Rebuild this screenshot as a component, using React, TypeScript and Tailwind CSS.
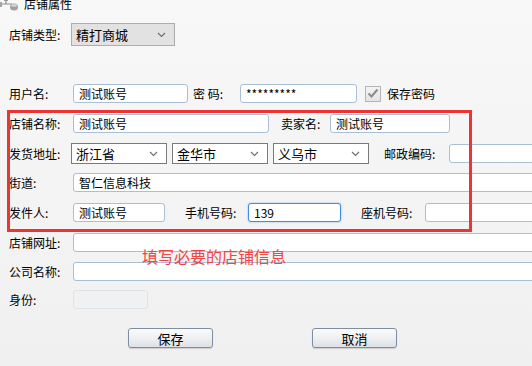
const font = { fontFamily: '"Noto Sans CJK SC", "Noto Sans", sans-serif' };

function Chevron() {
  return (
    <svg width="9" height="6" viewBox="0 0 9 6" className="shrink-0">
      <path d="M1 1 L4.5 4.5 L8 1" fill="none" stroke="#6b6b6b" strokeWidth="1.1" />
    </svg>
  );
}

function Select({ value, w, gray }: { value: string; w: string; gray?: boolean }) {
  return (
    <div
      className={`${w} h-full shrink-0 flex items-center justify-between pl-[4px] pr-[8px] border ${
        gray ? 'bg-[#e2e2e2] border-[#adadad] text-[13px]' : 'bg-white border-[#7a7a7a] text-[13px]'
      } text-black`}
    >
      <span className="leading-none">{value}</span>
      <Chevron />
    </div>
  );
}

function Field({ w, value, focus, disabled }: { w: string; value?: string; focus?: boolean; disabled?: boolean }) {
  let cls = 'bg-white border-[#a9bfd6]';
  if (focus) cls = 'bg-white border-[#3d8ee6] shadow-[0_0_2px_#7fb2ef]';
  if (disabled) cls = 'bg-[#f0f1f3] border-[#dfe3e8]';
  return (
    <div className={`${w} h-full shrink-0 rounded-[3px] border ${cls} flex items-center pl-[5px] text-[12px] text-black`}>
      {value}
    </div>
  );
}

function Label({ text, w }: { text: string; w?: string }) {
  return <span className={`${w ?? 'w-[64px]'} shrink-0 text-[12px] text-black leading-none whitespace-nowrap`}>{text}</span>;
}

function Btn({ text }: { text: string }) {
  return (
    <button className="w-[85px] h-[20px] rounded-[3px] border border-[#7d8ea3] bg-gradient-to-b from-[#fbfbfb] via-[#eef0f2] to-[#dde1e6] shadow-[0_1px_1px_rgba(0,0,0,0.15)] text-[13px] text-black leading-none flex items-center justify-center">
      {text}
    </button>
  );
}

export default function App() {
  return (
    <div
      className="relative w-[532px] h-[366px] overflow-hidden bg-gradient-to-b from-[#f8f8f8] to-[#f0f0f0] flex flex-col"
      style={font}
    >
      {/* title */}
      <div className="-mt-[4px] h-[16px] flex items-center gap-[5px] shrink-0">
        <svg width="19" height="16" viewBox="0 0 19 16" className="shrink-0">
          <path d="M2 8 H12 M6 4 V8" stroke="#8a8a8a" strokeWidth="1.2" fill="none" />
          <rect x="4" y="2" width="4" height="3" fill="#9a9a9a" />
          <path d="M1 6 V11" stroke="#8a8a8a" strokeWidth="1.5" />
          <ellipse cx="14" cy="11" rx="4" ry="3.5" fill="#a0a0a0" />
          <ellipse cx="14" cy="9.5" rx="3" ry="1.3" fill="#d8d8d8" />
        </svg>
        <span className="text-[12px] text-black leading-none">店铺属性</span>
      </div>

      {/* store type */}
      <div className="mt-[11px] h-[23px] pl-[9px] flex items-center shrink-0">
        <Label text="店铺类型:" w="w-[62px]" />
        <Select value="精打商城" w="w-[104px]" gray />
      </div>

      {/* user */}
      <div className="mt-[38px] h-[19px] pl-[9px] flex items-center shrink-0">
        <Label text="用户名:" />
        <Field w="w-[115px]" value="测试账号" />
        <span className="ml-[5px] w-[47px] shrink-0 text-[12px] leading-none">密&nbsp;码:</span>
        <Field w="w-[117px]" value="*********" />
        <div className="ml-[8px] w-[16px] h-[16px] shrink-0 border border-[#b5b5b5] bg-gradient-to-b from-[#f4f4f4] to-[#e4e4e4] flex items-center justify-center">
          <svg width="12" height="11" viewBox="0 0 12 11">
            <path d="M1.5 5.5 L4.5 8.5 L10.5 1.5" fill="none" stroke="#8c8c8c" strokeWidth="2" />
          </svg>
        </div>
        <span className="ml-[6px] text-[12px] leading-none">保存密码</span>
      </div>

      {/* shop name */}
      <div className="mt-[11px] h-[19px] pl-[9px] flex items-center shrink-0">
        <Label text="店铺名称:" />
        <Field w="w-[196px]" value="测试账号" />
        <span className="ml-[12px] w-[49px] shrink-0 text-[12px] leading-none">卖家名:</span>
        <Field w="w-[120px]" value="测试账号" />
      </div>

      {/* address */}
      <div className="mt-[10px] h-[21px] pl-[9px] flex items-center shrink-0">
        <Label text="发货地址:" w="w-[62px]" />
        <Select value="浙江省" w="w-[96px]" />
        <div className="w-[5px] shrink-0" />
        <Select value="金华市" w="w-[96px]" />
        <div className="w-[5px] shrink-0" />
        <Select value="义乌市" w="w-[96px]" />
        <span className="ml-[15px] w-[65px] shrink-0 text-[12px] leading-none">邮政编码:</span>
        <div className="h-[19px] flex">
          <Field w="w-[100px]" />
        </div>
      </div>

      {/* street */}
      <div className="mt-[9px] h-[19px] pl-[9px] flex items-center shrink-0">
        <Label text="街道:" />
        <Field w="w-[470px]" value="智仁信息科技" />
      </div>

      {/* sender */}
      <div className="mt-[11px] h-[19px] pl-[9px] flex items-center shrink-0">
        <Label text="发件人:" />
        <Field w="w-[92px]" value="测试账号" />
        <span className="ml-[20px] w-[63px] shrink-0 text-[12px] leading-none">手机号码:</span>
        <Field w="w-[93px]" value="139" focus />
        <span className="ml-[20px] w-[64px] shrink-0 text-[12px] leading-none">座机号码:</span>
        <Field w="w-[120px]" />
      </div>

      {/* url */}
      <div className="mt-[11px] h-[19px] pl-[9px] flex items-center shrink-0">
        <Label text="店铺网址:" />
        <Field w="w-[470px]" />
      </div>

      {/* company */}
      <div className="mt-[10px] h-[19px] pl-[9px] flex items-center shrink-0">
        <Label text="公司名称:" />
        <Field w="w-[470px]" />
      </div>

      {/* id */}
      <div className="mt-[9px] h-[19px] pl-[9px] flex items-center shrink-0">
        <Label text="身份:" />
        <Field w="w-[75px]" disabled />
      </div>

      {/* buttons */}
      <div className="mt-[19px] pl-[128px] flex items-center gap-[99px] shrink-0">
        <Btn text="保存" />
        <Btn text="取消" />
      </div>

      {/* annotation */}
      <div className="absolute left-[7px] top-[110px] w-[465px] h-[122px] border-[3px] border-[#ee3333] pointer-events-none" />
      <span className="absolute left-[142px] top-[247px] text-[16px] leading-[18px] text-[#f04545]">填写必要的店铺信息</span>
    </div>
  );
}
